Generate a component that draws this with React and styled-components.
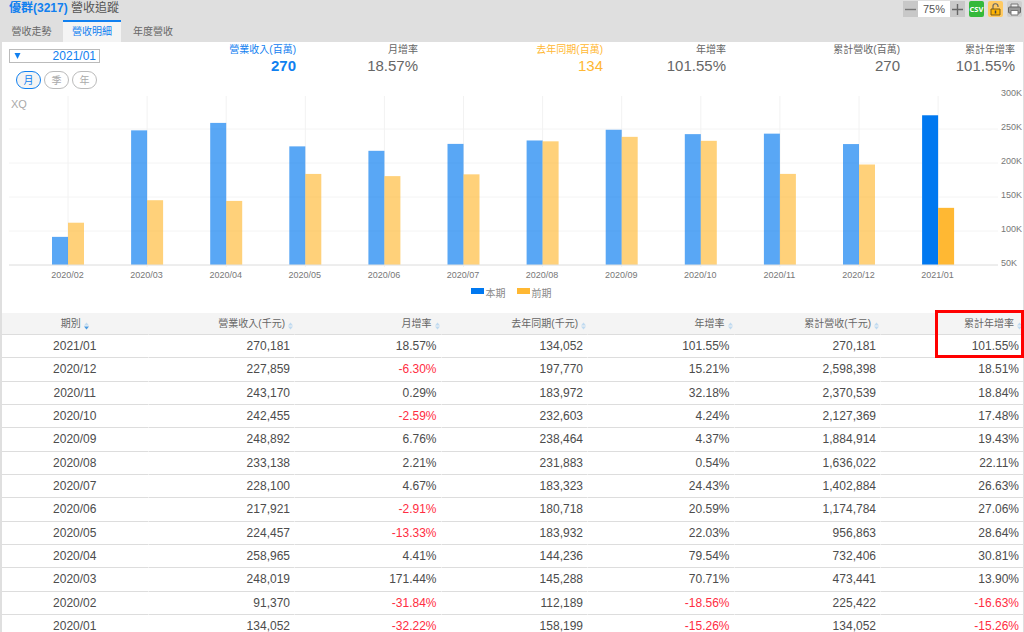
import React, { useState } from "react";
import styled, { createGlobalStyle } from "styled-components";

const GlobalStyle = createGlobalStyle`
  body {
    margin: 0;
    background-color: #dfdfdf;
    font-family: "Liberation Sans", "Noto Sans CJK TC", sans-serif;
    color: #555;
  }

  * {
    box-sizing: border-box;
  }
`;

const Page = styled.div`
  height: 100vh;
  overflow: hidden;
`;

const TopBar = styled.header`
  display: flex;
  justify-content: space-between;
  height: 20px;
  padding-left: 9px;
`;

const Title = styled.h1`
  margin: 0;
  font-size: 12px;
  line-height: 16px;
  font-weight: 400;

  strong {
    color: #1080f0;
  }
`;

const Tools = styled.div`
  display: flex;
  align-items: center;
  gap: 4px;
  padding: 1px 2px 3px 0;
`;

const Zoom = styled.div`
  display: flex;
  height: 16px;
  background-color: #fff;
`;

const ZoomValue = styled.output`
  width: 32px;
  font-size: 11px;
  line-height: 16px;
  text-align: center;
`;

const ToolButton = styled.button`
  display: flex;
  align-items: center;
  justify-content: center;
  width: 15px;
  height: 16px;
  padding: 0;
  border: 0;
  border-radius: ${(props) => (props.$round ? "2px" : "0")};
  background-color: ${(props) => props.$bg || "#c8c8c8"};
  cursor: pointer;
`;

const Tabs = styled.nav`
  display: flex;
  height: 22px;
  padding-left: 2px;
`;

const Tab = styled.a`
  width: ${(props) => (props.$active ? "58px" : "61px")};
  padding-right: ${(props) => (props.$active ? "0" : "2px")};
  border-top: 2px solid ${(props) => (props.$active ? "#1080f0" : "transparent")};
  background-color: ${(props) => (props.$active ? "#f4f4f4" : "transparent")};
  color: ${(props) => (props.$active ? "#1080f0" : "#666")};
  font-size: 10px;
  line-height: 20px;
  text-align: center;
  text-decoration: none;

  &:last-child {
    width: 64px;
    padding-right: 0;
  }
`;

const Content = styled.main`
  border-left: 2px solid #dfdfdf;
  border-right: 1px solid #dfdfdf;
  background-color: #fff;
`;

const Summary = styled.section`
  display: flex;
  height: 51px;
`;

const Filters = styled.div`
  flex: 0 0 146px;
  padding: 7px 0 0 7px;
`;

const MonthBox = styled.div`
  display: flex;
  align-items: center;
  width: 91px;
  height: 14px;
  border: 1px solid #bbb;

  svg {
    flex: none;
    margin-left: 4px;
  }

  select {
    flex: 1;
    height: 12px;
    padding: 0 3px 0 0;
    border: 0;
    appearance: none;
    background: none;
    color: #1080f0;
    font: 12px/12px "Liberation Sans", sans-serif;
    text-align: right;
    text-align-last: right;
  }
`;

const Periods = styled.div`
  display: flex;
  gap: 3px;
  padding: 8px 0 0 7px;
`;

const Period = styled.button`
  width: 25px;
  height: 18px;
  padding: 0;
  border: 1px solid ${(props) => (props.$active ? "#1080f0" : "#bbb")};
  border-radius: 9px;
  background-color: ${(props) => (props.$active ? "#f4f4f4" : "#fff")};
  color: ${(props) => (props.$active ? "#1080f0" : "#aaa")};
  font: 10px/16px "Noto Sans CJK TC", sans-serif;
  cursor: pointer;
`;

const Stats = styled.dl`
  flex: 1;
  display: grid;
  grid-template-columns: 148px 122px 185px 123px 174px 1fr;
  margin: 0;
  padding-right: 8px;
`;

const Stat = styled.div`
  color: ${(props) => props.$color || "#666"};
  text-align: right;

  dt {
    font-size: 10px;
    line-height: 15px;
  }

  dd {
    margin: 0;
    font-size: 15px;
    line-height: 17px;
    font-weight: ${(props) => (props.$bold ? 700 : 400)};
  }
`;

const ChartSvg = styled.svg`
  display: block;
  width: 100%;
  height: auto;
  overflow: visible;

  text {
    font-family: "Liberation Sans", sans-serif;
    font-size: 9px;
    fill: #777;
  }

  .mark {
    font-size: 11px;
    fill: #aaa;
  }
`;

const Legend = styled.ul`
  display: flex;
  justify-content: center;
  gap: 11px;
  height: 27px;
  margin: 0;
  padding: 0 3px 0 0;
  list-style: none;
`;

const LegendItem = styled.li`
  display: flex;
  gap: 2px;
  color: #888;
  font-size: 10px;
  line-height: 16px;

  &::before {
    content: "";
    width: 13px;
    height: 6px;
    margin-top: 2px;
    background-color: ${(props) => props.$color};
  }
`;

const Table = styled.table`
  width: 100%;
  table-layout: fixed;
  border-collapse: separate;
  border-spacing: 0;
  font-size: 12px;

  th,
  td {
    padding: 0 4px 1px 0;
    border-right: 1px solid #fff;
    border-bottom: 1px solid #ddd;
    text-align: right;
    line-height: 16px;
    font-weight: 400;
  }

  th:last-child,
  td:last-child {
    border-right: 0;
  }

  th:first-child,
  td:first-child {
    padding-right: 0;
    text-align: center;
  }

  th {
    width: 14.35%;
    height: 22px;
    padding: 0 1px 0 0;
    border-right-color: #f4f4f4;
    background-color: #f4f4f4;
    color: #666;
  }

  th:last-child {
    width: auto;
  }

  td {
    height: 23px;
  }

  tr:nth-child(3n + 2) td {
    height: 24px;
  }
`;

const SortButton = styled.button`
  padding: 0;
  border: 0;
  background: none;
  color: inherit;
  font: 10px/16px "Liberation Sans", "Noto Sans CJK TC", sans-serif;
  white-space: nowrap;
  cursor: pointer;

  svg {
    margin-left: 3px;
    vertical-align: -3px;
  }
`;

const Value = styled.td`
  color: ${(props) => (props.$negative ? "#ff2d42" : "#4c4c4c")};
`;

const TableArea = styled.section`
  position: relative;
`;

const Highlight = styled.div`
  position: absolute;
  top: -3px;
  right: -1px;
  width: 89px;
  height: 48px;
  border: 3px solid #f00;
  pointer-events: none;
`;

const BLUE = "#0078f0";
const ORANGE = "#ffb833";

const columns = [
  "期別",
  "營業收入(千元)",
  "月增率",
  "去年同期(千元)",
  "年增率",
  "累計營收(千元)",
  "累計年增率",
];

const rows = [
  ["2021/01", "270,181", "18.57%", "134,052", "101.55%", "270,181", "101.55%"],
  ["2020/12", "227,859", "-6.30%", "197,770", "15.21%", "2,598,398", "18.51%"],
  ["2020/11", "243,170", "0.29%", "183,972", "32.18%", "2,370,539", "18.84%"],
  ["2020/10", "242,455", "-2.59%", "232,603", "4.24%", "2,127,369", "17.48%"],
  ["2020/09", "248,892", "6.76%", "238,464", "4.37%", "1,884,914", "19.43%"],
  ["2020/08", "233,138", "2.21%", "231,883", "0.54%", "1,636,022", "22.11%"],
  ["2020/07", "228,100", "4.67%", "183,323", "24.43%", "1,402,884", "26.63%"],
  ["2020/06", "217,921", "-2.91%", "180,718", "20.59%", "1,174,784", "27.06%"],
  ["2020/05", "224,457", "-13.33%", "183,932", "22.03%", "956,863", "28.64%"],
  ["2020/04", "258,965", "4.41%", "144,236", "79.54%", "732,406", "30.81%"],
  ["2020/03", "248,019", "171.44%", "145,288", "70.71%", "473,441", "13.90%"],
  ["2020/02", "91,370", "-31.84%", "112,189", "-18.56%", "225,422", "-16.63%"],
  ["2020/01", "134,052", "-32.22%", "158,199", "-15.26%", "134,052", "-15.26%"],
];

const stats = [
  { label: "營業收入(百萬)", value: "270", color: "#1080f0", bold: true },
  { label: "月增率", value: "18.57%" },
  { label: "去年同期(百萬)", value: "134", color: "#ffb833" },
  { label: "年增率", value: "101.55%" },
  { label: "累計營收(百萬)", value: "270" },
  { label: "累計年增率", value: "101.55%" },
];

const toNumber = (text) => Number(text.replace(/,/g, ""));

// 50K sits on the axis, every 50K is 34 units tall
const BASE = 172;
const yOf = (value) => BASE - ((value - 50000) / 50000) * 34;

function Chart() {
  const months = rows.slice(0, 12).reverse();

  return (
    <ChartSvg viewBox="0 0 1021 193" role="img" aria-label="營收明細">
      {[300, 250, 200, 150, 100, 50].map((k) => {
        const y = yOf(k * 1000);
        return (
          <g key={k}>
            {k < 300 && (
              <line x1="7" x2="996" y1={y} y2={y} stroke="#f4f4f4" />
            )}
            <text x="999" y={y + 1}>
              {k}K
            </text>
          </g>
        );
      })}
      {months.map((row, i) => {
        const x = 66 + i * 79.1;
        const now = yOf(toNumber(row[1]));
        const before = yOf(toNumber(row[3]));
        const opacity = i == months.length - 1 ? 1 : 0.65;
        return (
          <g key={row[0]}>
            <line x1={x} x2={x} y1="3" y2={BASE + 2} stroke="#f2f2f2" />
            <rect
              x={x - 16}
              y={now}
              width="16"
              height={BASE - now}
              fill={BLUE}
              opacity={opacity}
            />
            <rect
              x={x}
              y={before}
              width="16"
              height={BASE - before}
              fill={ORANGE}
              opacity={opacity}
            />
            <text x={x - 0.5} y={BASE + 13} textAnchor="middle">
              {row[0]}
            </text>
          </g>
        );
      })}
      <line x1="7" x2="996" y1={BASE} y2={BASE} stroke="#e2e2e2" />
      <text className="mark" x="9" y="15">
        XQ
      </text>
    </ChartSvg>
  );
}

function SortIcon({ active }) {
  return (
    <svg width="5" height="8" viewBox="0 0 5 8" aria-hidden="true">
      <path d="M2.5 .5 5 3.500H0z" fill="#c0daf0" />
      <path d="M0 4.500h5L2.500 7.500z" fill={active ? "#4a9ae0" : "#c0daf0"} />
    </svg>
  );
}

export default function App() {
  const [zoom, setZoom] = useState(75);
  const [period, setPeriod] = useState("月");

  return (
    <Page>
      <GlobalStyle />
      <TopBar>
        <Title>
          <strong>優群(3217)</strong> 營收追蹤
        </Title>
        <Tools>
          <Zoom>
            <ToolButton aria-label="縮小" onClick={() => setZoom(zoom - 5)}>
              <svg width="11" height="11" viewBox="0 0 11 11">
                <path d="M0 5.5h11" stroke="#777" strokeWidth="1.4" />
              </svg>
            </ToolButton>
            <ZoomValue>{zoom}%</ZoomValue>
            <ToolButton aria-label="放大" onClick={() => setZoom(zoom + 5)}>
              <svg width="11" height="11" viewBox="0 0 11 11">
                <path d="M0 5.5h11M5.5 0v11" stroke="#666" strokeWidth="1.4" />
              </svg>
            </ToolButton>
          </Zoom>
          <ToolButton $round $bg="#34b93a" aria-label="CSV">
            <svg width="15" height="15" viewBox="0 0 15 15">
              <text
                x="7.5"
                y="10"
                textAnchor="middle"
                fontFamily="Open Sans"
                fontSize="7.500"
                fontWeight="700"
                fill="#fff"
              >
                CSV
              </text>
            </svg>
          </ToolButton>
          <ToolButton $round $bg="#ffca62" aria-label="解鎖">
            <svg width="15" height="15" viewBox="0 0 15 15" fill="none">
              <path d="M5 7V4.500a2.500 2.500 0 0 1 5-.5v1" stroke="#666" strokeWidth="1.2" />
              <path d="M3 7h9v6H3z" fill="#ffb400" stroke="#7a5a10" />
              <path d="M7.500 8.500v3" stroke="#444" strokeWidth="1.5" />
            </svg>
          </ToolButton>
          <ToolButton $round $bg="#cfcfcf" aria-label="列印">
            <svg width="15" height="15" viewBox="0 0 15 15" fill="none">
              <path d="M4 5V2h7v3" fill="#eee" stroke="#777" />
              <rect x="1.500" y="5" width="12" height="6" rx="1" fill="#999" stroke="#666" />
              <path d="M4 8.500h7V13H4z" fill="#fff" stroke="#777" />
            </svg>
          </ToolButton>
        </Tools>
      </TopBar>
      <Tabs>
        <Tab href="#trend">營收走勢</Tab>
        <Tab href="#detail" $active>
          營收明細
        </Tab>
        <Tab href="#year">年度營收</Tab>
      </Tabs>
      <Content>
        <Summary>
          <Filters>
            <MonthBox>
              <svg width="7" height="6" viewBox="0 0 7 6" aria-hidden="true">
                <path d="M.5 0h6L3.500 6z" fill="#1080f0" />
              </svg>
              <select aria-label="月份" defaultValue="2021/01">
                {rows.map((row) => (
                  <option key={row[0]}>{row[0]}</option>
                ))}
              </select>
            </MonthBox>
            <Periods>
              {["月", "季", "年"].map((name) => (
                <Period
                  key={name}
                  $active={name == period}
                  onClick={() => setPeriod(name)}
                >
                  {name}
                </Period>
              ))}
            </Periods>
          </Filters>
          <Stats>
            {stats.map((stat) => (
              <Stat key={stat.label} $color={stat.color} $bold={stat.bold}>
                <dt>{stat.label}</dt>
                <dd>{stat.value}</dd>
              </Stat>
            ))}
          </Stats>
        </Summary>
        <Chart />
        <Legend>
          <LegendItem $color={BLUE}>本期</LegendItem>
          <LegendItem $color={ORANGE}>前期</LegendItem>
        </Legend>
        <TableArea>
          <Table>
            <thead>
              <tr>
                {columns.map((name, i) => (
                  <th key={name} scope="col">
                    <SortButton>
                      {name}
                      <SortIcon active={i == 0} />
                    </SortButton>
                  </th>
                ))}
              </tr>
            </thead>
            <tbody>
              {rows.map((row) => (
                <tr key={row[0]}>
                  {row.map((value, i) => (
                    <Value key={i} $negative={value.startsWith("-")}>
                      {value}
                    </Value>
                  ))}
                </tr>
              ))}
            </tbody>
          </Table>
          <Highlight />
        </TableArea>
      </Content>
    </Page>
  );
}
